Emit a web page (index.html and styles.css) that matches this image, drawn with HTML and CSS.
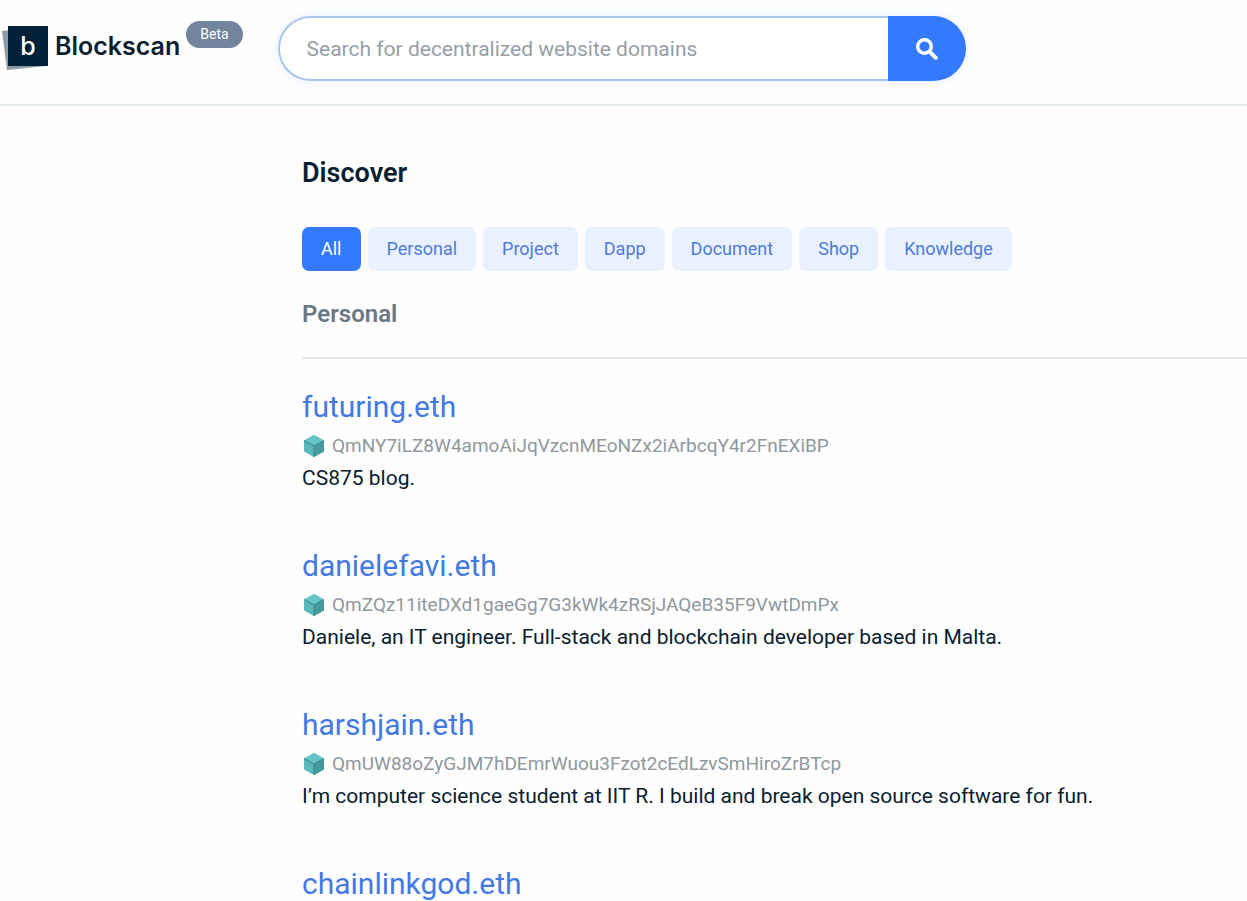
FILE: index.html
```html
<!DOCTYPE html>
<html lang="en">

<head>
    <meta charset="UTF-8">
    <meta name="viewport" content="width=device-width, initial-scale=1.0">
    <title>Blockscan</title>
    <link rel="stylesheet" href="styles.css">
</head>

<body>

    <svg class="symbols" aria-hidden="true">
        <symbol id="cube" viewBox="0 0 22 24">
            <path fill="#59b9bd" d="M11 1 21 6.500v11L11 23 1 17.500v-11z" />
            <path fill="#469a9e" d="M11 12 21 6.500v11L11 23z" />
            <path fill="#66c3c6" d="M11 1 21 6.500 11 12 1 6.500z" />
            <path fill="none" stroke="#3b8589" stroke-width="1" d="M1 6.500 11 12l10-5.500M11 12v11" />
        </symbol>
    </svg>

    <header class="header">
        <a class="brand" href="#">
            <span class="brand-mark">
                <svg class="brand-back" viewBox="0 0 46 46" aria-hidden="true">
                    <path fill="#8d9ba6" d="M0 5 40 1l4 39-39 4z" />
                    <path fill="#00213a" d="M6 0h40v40H6z" />
                </svg>
                <span class="brand-letter">b</span>
            </span>
            <span class="brand-name">Blockscan</span>
            <span class="badge">Beta</span>
        </a>

        <form class="search">
            <input class="search-input" type="text" aria-label="Search domains"
                placeholder="Search for decentralized website domains">
            <button class="search-button" type="button" aria-label="Search">
                <svg class="search-icon" viewBox="0 0 22 22" fill="none" stroke="#fff" aria-hidden="true">
                    <circle cx="8.500" cy="8.500" r="6.800" stroke-width="3.400" />
                    <path d="m13.800 13.800 6 6" stroke-width="4" stroke-linecap="round" />
                </svg>
            </button>
        </form>
    </header>

    <main class="content">
        <h1 class="title">Discover</h1>

        <div class="filters">
            <button class="filter active">All</button>
            <button class="filter">Personal</button>
            <button class="filter">Project</button>
            <button class="filter">Dapp</button>
            <button class="filter">Document</button>
            <button class="filter">Shop</button>
            <button class="filter">Knowledge</button>
        </div>

        <h2 class="section-title">Personal</h2>

        <div class="results">
            <article class="result">
                <h3 class="domain"><a href="#">futuring.eth</a></h3>
                <p class="hash"><svg class="cube"><use href="#cube" /></svg>QmNY7iLZ8W4amoAiJqVzcnMEoNZx2iArbcqY4r2FnEXiBP</p>
                <p class="description">CS875 blog.</p>
            </article>

            <article class="result">
                <h3 class="domain"><a href="#">danielefavi.eth</a></h3>
                <p class="hash"><svg class="cube"><use href="#cube" /></svg>QmZQz11iteDXd1gaeGg7G3kWk4zRSjJAQeB35F9VwtDmPx</p>
                <p class="description">Daniele, an IT engineer. Full-stack and blockchain developer based in Malta.</p>
            </article>

            <article class="result">
                <h3 class="domain"><a href="#">harshjain.eth</a></h3>
                <p class="hash"><svg class="cube"><use href="#cube" /></svg>QmUW88oZyGJM7hDEmrWuou3Fzot2cEdLzvSmHiroZrBTcp</p>
                <p class="description">I’m computer science student at IIT R. I build and break open source software for fun.</p>
            </article>

            <article class="result">
                <h3 class="domain"><a href="#">chainlinkgod.eth</a></h3>
            </article>
        </div>
    </main>

</body>

</html>
```
FILE: styles.css
```css
* {
    margin: 0;
    padding: 0;
    box-sizing: border-box;
    font-family: Roboto, sans-serif;
}

body {
    background-color: #fefefe;
    color: #08202f;
}

a {
    color: inherit;
    text-decoration: none;
}

.symbols {
    display: none;
}

.header {
    display: flex;
    align-items: flex-start;
    gap: 35px;
    padding: 16px 0 23px 2px;
    border-bottom: 2px solid #e3ecee;
}

.brand {
    display: flex;
    align-items: flex-start;
    padding-top: 5px;
}

.brand-mark {
    position: relative;
    width: 46px;
    height: 46px;
    margin-top: 5px;
}

.brand-back {
    display: block;
    width: 46px;
    height: 46px;
}

/* letter sits over the dark square */
.brand-letter {
    position: absolute;
    top: 0;
    left: 6px;
    width: 40px;
    line-height: 40px;
    text-align: center;
    font-family: Inter, sans-serif;
    font-size: 25px;
    font-weight: 500;
    color: #fff;
}

.brand-name {
    margin: 5px 6px 0 7px;
    line-height: 40px;
    font-family: Inter, sans-serif;
    font-size: 25px;
    font-weight: 600;
}

.badge {
    padding: 0 14px;
    border-radius: 14px;
    background-color: #73859c;
    color: #fff;
    font-size: 14px;
    line-height: 27px;
}

.search {
    display: flex;
    flex: 0 1 688px;
    height: 65px;
    border-radius: 33px;
    box-shadow: 0 0 10px rgba(52, 120, 255, 0.12);
}

.search-input {
    flex: 1;
    min-width: 0;
    padding: 0 27px;
    border: 2px solid #abc3ef;
    border-right: none;
    border-radius: 33px 0 0 33px;
    outline: none;
    background-color: #fff;
    font-size: 21px;
}

.search-input::placeholder {
    color: #969fa8;
}

.search-button {
    display: flex;
    align-items: center;
    justify-content: center;
    width: 78px;
    border: none;
    border-radius: 0 33px 33px 0;
    background-color: #347aff;
    cursor: pointer;
}

.search-icon {
    width: 22px;
    height: 22px;
}

.content {
    padding: 47px 0 0 302px;
}

.title {
    font-size: 27px;
    font-weight: 600;
    line-height: 40px;
}

.filters {
    display: flex;
    flex-wrap: wrap;
    gap: 7px;
    margin-top: 34px;
}

.filter {
    padding: 0 19px;
    border: none;
    border-radius: 7px;
    background-color: #e9f1fe;
    color: #507bdb;
    font-size: 18px;
    line-height: 44px;
    cursor: pointer;
}

.filter.active {
    background-color: #347aff;
    color: #fff;
}

.section-title {
    padding: 26px 0;
    border-bottom: 2px solid #e9eaeb;
    color: #6b7885;
    font-size: 24px;
    font-weight: 600;
    line-height: 34px;
}

.results {
    display: flex;
    flex-direction: column;
    gap: 50px;
    padding-top: 26px;
}

.domain {
    color: #4479e4;
    font-size: 30px;
    font-weight: 400;
    line-height: 44px;
}

.hash {
    display: flex;
    align-items: center;
    gap: 6px;
    color: #8f989d;
    font-size: 19px;
    line-height: 33px;
}

.cube {
    width: 24px;
    height: 24px;
}

.description {
    font-size: 21px;
    line-height: 32px;
}
```
